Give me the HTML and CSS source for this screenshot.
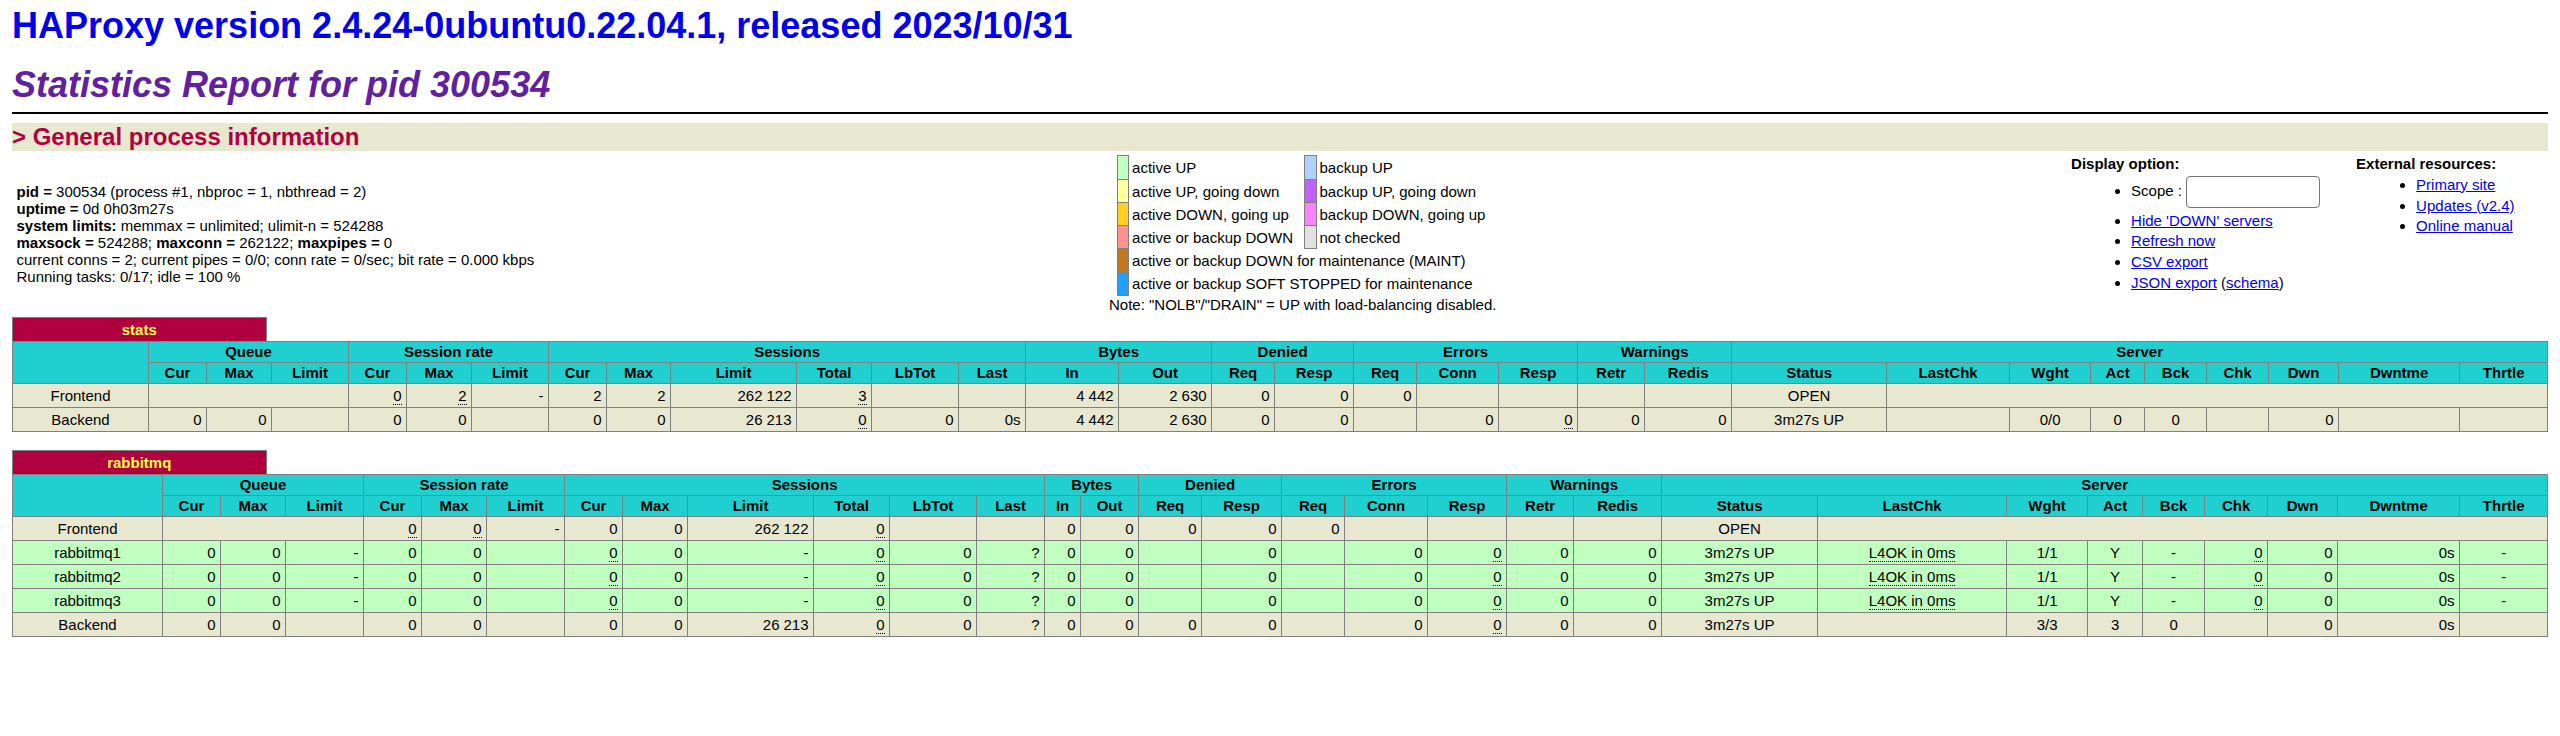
FILE: index.html
```html
<!DOCTYPE html>
<html lang="en">
<head>
<meta charset="utf-8">
<title>Statistics Report for HAProxy</title>
<link rel="stylesheet" href="styles.css">
</head>
<body>
<h1><a class="home" href="#">HAProxy version 2.4.24-0ubuntu0.22.04.1, released 2023/10/31</a></h1>
<h2>Statistics Report for pid 300534</h2>
<hr class="hr">
<h3>&gt; General process information</h3>
<table class="info">
<tr>
<td class="info-proc">
<p class="proc"><b>pid = </b> 300534 (process #1, nbproc = 1, nbthread = 2)<br>
<b>uptime = </b> 0d 0h03m27s<br>
<b>system limits:</b> memmax = unlimited; ulimit-n = 524288<br>
<b>maxsock = </b> 524288; <b>maxconn = </b> 262122; <b>maxpipes = </b> 0<br>
current conns = 2; current pipes = 0/0; conn rate = 0/sec; bit rate = 0.000 kbps<br>
Running tasks: 0/17; idle = 100 %<br>
</p>
</td>
<td class="info-legend">
<table class="lgd">
<tr><td class="active_up">&nbsp;</td><td class="noborder">active UP </td><td class="backup_up">&nbsp;</td><td class="noborder">backup UP </td></tr>
<tr><td class="active_going_down"></td><td class="noborder">active UP, going down </td><td class="backup_going_down"></td><td class="noborder">backup UP, going down </td></tr>
<tr><td class="active_going_up"></td><td class="noborder">active DOWN, going up </td><td class="backup_going_up"></td><td class="noborder">backup DOWN, going up </td></tr>
<tr><td class="active_down"></td><td class="noborder">active or backup DOWN &nbsp;</td><td class="no_check"></td><td class="noborder">not checked </td></tr>
<tr><td class="maintain"></td><td class="noborder" colspan="3">active or backup DOWN for maintenance (MAINT) &nbsp;</td></tr>
<tr><td class="draining"></td><td class="noborder" colspan="3">active or backup SOFT STOPPED for maintenance &nbsp;</td></tr>
</table>
Note: "NOLB"/"DRAIN" = UP with load-balancing disabled.
</td>
<td class="info-side">
<b>Display option:</b>
<ul class="opts">
<li><form class="scope">Scope : <input class="scope-input" name="scope" size="8"></form></li>
<li><a href="#">Hide 'DOWN' servers</a></li>
<li><a href="#">Refresh now</a></li>
<li><a href="#">CSV export</a></li>
<li><a href="#">JSON export</a> (<a href="#">schema</a>)</li>
</ul>
</td>
<td class="info-side">
<b>External resources:</b>
<ul class="opts">
<li><a href="#">Primary site</a></li>
<li><a href="#">Updates (v2.4)</a></li>
<li><a href="#">Online manual</a></li>
</ul>
</td>
</tr>
</table>

<section class="proxy">
<table class="tbl">
<tr class="titre"><th class="pxname"><a class="px" href="#stats">stats</a></th><th class="empty"></th></tr>
</table>
<table class="tbl grid">
<colgroup><col class="w136"><col class="w58"><col class="w65"><col class="w77"><col class="w58"><col class="w65"><col class="w77"><col class="w58"><col class="w64"><col class="w126"><col class="w75"><col class="w87"><col class="w67"><col class="w93"><col class="w93"><col class="w63"><col class="w79"><col class="w63"><col class="w82"><col class="w79"><col class="w67"><col class="w87"><col class="w155"><col class="w123"><col class="w81"><col class="w54"><col class="w62"><col class="w62"><col class="w70"><col class="w121"><col class="w88"></colgroup>
<tr class="titre"><th rowspan="2"></th><th colspan="3">Queue</th><th colspan="3">Session rate</th><th colspan="6">Sessions</th><th colspan="2">Bytes</th><th colspan="2">Denied</th><th colspan="3">Errors</th><th colspan="2">Warnings</th><th colspan="9">Server</th></tr>
<tr class="titre"><th>Cur</th><th>Max</th><th>Limit</th><th>Cur</th><th>Max</th><th>Limit</th><th>Cur</th><th>Max</th><th>Limit</th><th>Total</th><th>LbTot</th><th>Last</th><th>In</th><th>Out</th><th>Req</th><th>Resp</th><th>Req</th><th>Conn</th><th>Resp</th><th>Retr</th><th>Redis</th><th>Status</th><th>LastChk</th><th>Wght</th><th>Act</th><th>Bck</th><th>Chk</th><th>Dwn</th><th>Dwntme</th><th>Thrtle</th></tr>
<tr class="frontend"><td class="ac">Frontend</td><td colspan="3"></td><td><u>0</u></td><td><u>2</u></td><td>-</td><td>2</td><td>2</td><td><span class="rls">262</span>122</td><td><u>3</u></td><td></td><td></td><td><span class="rls">4</span>442</td><td><span class="rls">2</span>630</td><td>0</td><td>0</td><td>0</td><td></td><td></td><td></td><td></td><td class="ac">OPEN</td><td colspan="8"></td></tr>
<tr class="backend"><td class="ac">Backend</td><td>0</td><td>0</td><td></td><td>0</td><td>0</td><td></td><td>0</td><td>0</td><td><span class="rls">26</span>213</td><td><u>0</u></td><td>0</td><td>0s</td><td><span class="rls">4</span>442</td><td><span class="rls">2</span>630</td><td>0</td><td>0</td><td></td><td>0</td><td><u>0</u></td><td>0</td><td>0</td><td class="ac">3m27s UP</td><td></td><td class="ac">0/0</td><td class="ac">0</td><td class="ac">0</td><td></td><td>0</td><td></td><td></td></tr>
</table>
</section>

<section class="proxy">
<table class="tbl">
<tr class="titre"><th class="pxname"><a class="px" href="#rabbitmq">rabbitmq</a></th><th class="empty"></th></tr>
</table>
<table class="tbl grid">
<colgroup><col class="w150"><col class="w58"><col class="w65"><col class="w78"><col class="w58"><col class="w65"><col class="w78"><col class="w58"><col class="w65"><col class="w126"><col class="w76"><col class="w87"><col class="w68"><col class="w36"><col class="w58"><col class="w63"><col class="w80"><col class="w63"><col class="w83"><col class="w79"><col class="w67"><col class="w88"><col class="w156"><col class="w189"><col class="w81"><col class="w55"><col class="w62"><col class="w63"><col class="w70"><col class="w122"><col class="w88"></colgroup>
<tr class="titre"><th rowspan="2"></th><th colspan="3">Queue</th><th colspan="3">Session rate</th><th colspan="6">Sessions</th><th colspan="2">Bytes</th><th colspan="2">Denied</th><th colspan="3">Errors</th><th colspan="2">Warnings</th><th colspan="9">Server</th></tr>
<tr class="titre"><th>Cur</th><th>Max</th><th>Limit</th><th>Cur</th><th>Max</th><th>Limit</th><th>Cur</th><th>Max</th><th>Limit</th><th>Total</th><th>LbTot</th><th>Last</th><th>In</th><th>Out</th><th>Req</th><th>Resp</th><th>Req</th><th>Conn</th><th>Resp</th><th>Retr</th><th>Redis</th><th>Status</th><th>LastChk</th><th>Wght</th><th>Act</th><th>Bck</th><th>Chk</th><th>Dwn</th><th>Dwntme</th><th>Thrtle</th></tr>
<tr class="frontend"><td class="ac">Frontend</td><td colspan="3"></td><td><u>0</u></td><td><u>0</u></td><td>-</td><td>0</td><td>0</td><td><span class="rls">262</span>122</td><td><u>0</u></td><td></td><td></td><td>0</td><td>0</td><td>0</td><td>0</td><td>0</td><td></td><td></td><td></td><td></td><td class="ac">OPEN</td><td colspan="8"></td></tr>
<tr class="active_up"><td class="ac">rabbitmq1</td><td>0</td><td>0</td><td>-</td><td>0</td><td>0</td><td></td><td><u>0</u></td><td>0</td><td>-</td><td><u>0</u></td><td>0</td><td>?</td><td>0</td><td>0</td><td></td><td>0</td><td></td><td>0</td><td><u>0</u></td><td>0</td><td>0</td><td class="ac">3m27s UP</td><td class="ac"><u>L4OK in 0ms</u></td><td class="ac">1/1</td><td class="ac">Y</td><td class="ac">-</td><td><u>0</u></td><td>0</td><td>0s</td><td class="ac">-</td></tr>
<tr class="active_up"><td class="ac">rabbitmq2</td><td>0</td><td>0</td><td>-</td><td>0</td><td>0</td><td></td><td><u>0</u></td><td>0</td><td>-</td><td><u>0</u></td><td>0</td><td>?</td><td>0</td><td>0</td><td></td><td>0</td><td></td><td>0</td><td><u>0</u></td><td>0</td><td>0</td><td class="ac">3m27s UP</td><td class="ac"><u>L4OK in 0ms</u></td><td class="ac">1/1</td><td class="ac">Y</td><td class="ac">-</td><td><u>0</u></td><td>0</td><td>0s</td><td class="ac">-</td></tr>
<tr class="active_up"><td class="ac">rabbitmq3</td><td>0</td><td>0</td><td>-</td><td>0</td><td>0</td><td></td><td><u>0</u></td><td>0</td><td>-</td><td><u>0</u></td><td>0</td><td>?</td><td>0</td><td>0</td><td></td><td>0</td><td></td><td>0</td><td><u>0</u></td><td>0</td><td>0</td><td class="ac">3m27s UP</td><td class="ac"><u>L4OK in 0ms</u></td><td class="ac">1/1</td><td class="ac">Y</td><td class="ac">-</td><td><u>0</u></td><td>0</td><td>0s</td><td class="ac">-</td></tr>
<tr class="backend"><td class="ac">Backend</td><td>0</td><td>0</td><td></td><td>0</td><td>0</td><td></td><td>0</td><td>0</td><td><span class="rls">26</span>213</td><td><u>0</u></td><td>0</td><td>?</td><td>0</td><td>0</td><td>0</td><td>0</td><td></td><td>0</td><td><u>0</u></td><td>0</td><td>0</td><td class="ac">3m27s UP</td><td></td><td class="ac">3/3</td><td class="ac">3</td><td class="ac">0</td><td></td><td>0</td><td>0s</td><td></td></tr>
</table>
</section>
</body>
</html>
```
FILE: styles.css
```css
body {
  margin: 5px 12px 12px;
  font-family: "Liberation Sans", Arial, Helvetica, sans-serif;
  font-size: 18px;
  font-weight: normal;
  color: black;
  background: white;
}
th, td { font-size: 15px; }
h1 {
  font-size: 36px;
  margin: 0 0 17px;
}
a.home { color: #0000ee; text-decoration: none; }
h2 {
  font-size: 36px;
  font-weight: bold;
  font-style: italic;
  color: #6020a0;
  margin: 0;
}
h3 {
  font-size: 24px;
  font-weight: bold;
  color: #b00040;
  background: #e8e8d0;
  margin: 0;
}
.hr {
  height: 0;
  margin: 6px 0 9px;
  border: 0;
  border-bottom: 2px solid black;
}
a { color: #0000ee; }

table.info { width: 100%; border-spacing: 3px; }
table.info > tbody > tr > td { padding: 1px 1.5px; white-space: nowrap; }
table.info > tbody > tr > td.info-side:last-child { padding-right: 0.5px; }
.info-proc { width: 1%; text-align: left; }
.proc { margin: 15px 0; }
.info-legend { text-align: center; }
.info-side { width: 1%; text-align: left; vertical-align: top; }
.opts { margin: 3.75px 0 20px; padding-left: 60px; }
.opts li { margin-top: 3.75px; margin-right: 30px; }
.scope { margin: 0; display: block; }
.scope-input {
  box-sizing: border-box;
  width: 134px;
  height: 32px;
  padding: 1px 3px;
  font-size: 20px;
  border: 1px solid #767676;
  border-radius: 4px;
  vertical-align: middle;
}

table.lgd { border-collapse: collapse; margin: auto; }
table.lgd td {
  border: 1px solid gray;
  padding: 3px;
  text-align: left;
}
table.lgd td.noborder { border-style: none; white-space: nowrap; }

.proxy { margin-bottom: 18px; }
table.tbl { width: 100%; border-collapse: collapse; border-style: none; }
table.grid { table-layout: fixed; }
table.tbl td {
  text-align: right;
  border: 1px solid gray;
  padding: 3px 4.5px;
  white-space: nowrap;
}
table.tbl td.ac { text-align: center; }
table.tbl th { border: 1px solid gray; padding: 1.5px; }
table.tbl th.pxname {
  width: 10%;
  background: #b00040;
  color: #ffff40;
  font-weight: bold;
  border-style: solid solid none solid;
  padding: 3px 4.5px;
  white-space: nowrap;
}
table.tbl th.empty { width: 90%; border-style: none; background: white; }
a.px { color: #ffff40; text-decoration: none; }
.titre { background: #20d0d0; color: #000000; font-weight: bold; text-align: center; }
.frontend, .backend { background: #e8e8d0; }
.active_up { background: #c0ffc0; }
.active_going_down { background: #ffffa0; }
.active_going_up { background: #ffd020; }
.active_down { background: #ff9090; }
.backup_up { background: #b0d0ff; }
.backup_going_down { background: #c060ff; }
.backup_going_up { background: #ff80ff; }
.no_check { background: #e0e0e0; }
.maintain { background: #c07820; }
.draining { background: #20a0ff; }
.rls { margin-right: 4px; }
u { text-decoration: none; border-bottom: 1px dotted black; }
.w36 { width: 36px; }
.w54 { width: 54px; }
.w55 { width: 55px; }
.w58 { width: 58px; }
.w62 { width: 62px; }
.w63 { width: 63px; }
.w64 { width: 64px; }
.w65 { width: 65px; }
.w67 { width: 67px; }
.w68 { width: 68px; }
.w70 { width: 70px; }
.w75 { width: 75px; }
.w76 { width: 76px; }
.w77 { width: 77px; }
.w78 { width: 78px; }
.w79 { width: 79px; }
.w80 { width: 80px; }
.w81 { width: 81px; }
.w82 { width: 82px; }
.w83 { width: 83px; }
.w87 { width: 87px; }
.w88 { width: 88px; }
.w93 { width: 93px; }
.w121 { width: 121px; }
.w122 { width: 122px; }
.w123 { width: 123px; }
.w126 { width: 126px; }
.w136 { width: 136px; }
.w150 { width: 150px; }
.w155 { width: 155px; }
.w156 { width: 156px; }
.w189 { width: 189px; }
```
